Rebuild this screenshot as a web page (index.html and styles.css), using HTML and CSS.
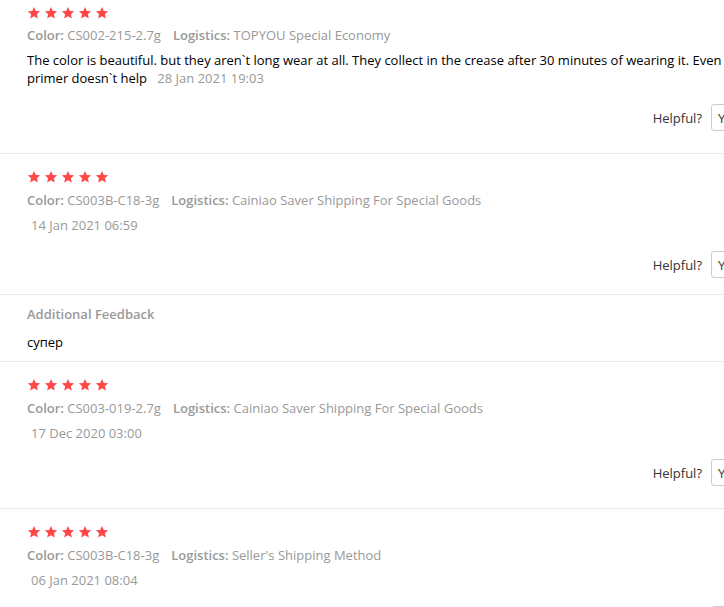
FILE: index.html
```html
<!DOCTYPE html>
<html lang="en">
<head>
<meta charset="utf-8">
<title>Reviews</title>
<link rel="stylesheet" href="styles.css">
</head>
<body>
<div class="feedback-list">
  <div class="review">
    <div class="stars">
      <svg viewBox="0 0 24 24"><path d="M12 1.5l3.1 6.9 7.4.7-5.6 5 1.7 7.4L12 17.6l-6.6 3.9 1.7-7.4-5.6-5 7.4-.7z"/></svg>
      <svg viewBox="0 0 24 24"><path d="M12 1.5l3.1 6.9 7.4.7-5.6 5 1.7 7.4L12 17.6l-6.6 3.9 1.7-7.4-5.6-5 7.4-.7z"/></svg>
      <svg viewBox="0 0 24 24"><path d="M12 1.5l3.1 6.9 7.4.7-5.6 5 1.7 7.4L12 17.6l-6.6 3.9 1.7-7.4-5.6-5 7.4-.7z"/></svg>
      <svg viewBox="0 0 24 24"><path d="M12 1.5l3.1 6.9 7.4.7-5.6 5 1.7 7.4L12 17.6l-6.6 3.9 1.7-7.4-5.6-5 7.4-.7z"/></svg>
      <svg viewBox="0 0 24 24"><path d="M12 1.5l3.1 6.9 7.4.7-5.6 5 1.7 7.4L12 17.6l-6.6 3.9 1.7-7.4-5.6-5 7.4-.7z"/></svg>
    </div>
    <div class="meta"><span class="prop"><b>Color:</b> CS002-215-2.7g</span><span class="prop"><b>Logistics:</b> TOPYOU Special Economy</span></div>
    <div class="body">The color is beautiful. but they aren`t long wear at all. They collect in the crease after 30 minutes of wearing it. Even primer doesn`t help <span class="date inline">28 Jan 2021 19:03</span></div>
    <div class="helpful"><span>Helpful?</span><button class="vote">Yes (0)</button><button class="vote">No (0)</button></div>
  </div>

  <div class="review has-additional">
    <div class="stars">
      <svg viewBox="0 0 24 24"><path d="M12 1.5l3.1 6.9 7.4.7-5.6 5 1.7 7.4L12 17.6l-6.6 3.9 1.7-7.4-5.6-5 7.4-.7z"/></svg>
      <svg viewBox="0 0 24 24"><path d="M12 1.5l3.1 6.9 7.4.7-5.6 5 1.7 7.4L12 17.6l-6.6 3.9 1.7-7.4-5.6-5 7.4-.7z"/></svg>
      <svg viewBox="0 0 24 24"><path d="M12 1.5l3.1 6.9 7.4.7-5.6 5 1.7 7.4L12 17.6l-6.6 3.9 1.7-7.4-5.6-5 7.4-.7z"/></svg>
      <svg viewBox="0 0 24 24"><path d="M12 1.5l3.1 6.9 7.4.7-5.6 5 1.7 7.4L12 17.6l-6.6 3.9 1.7-7.4-5.6-5 7.4-.7z"/></svg>
      <svg viewBox="0 0 24 24"><path d="M12 1.5l3.1 6.9 7.4.7-5.6 5 1.7 7.4L12 17.6l-6.6 3.9 1.7-7.4-5.6-5 7.4-.7z"/></svg>
    </div>
    <div class="meta"><span class="prop"><b>Color:</b> CS003B-C18-3g</span><span class="prop"><b>Logistics:</b> Cainiao Saver Shipping For Special Goods</span></div>
    <div class="body"><span class="date">14 Jan 2021 06:59</span></div>
    <div class="helpful"><span>Helpful?</span><button class="vote">Yes (0)</button><button class="vote">No (0)</button></div>
  </div>

  <div class="additional">
    <div class="add-title">Additional Feedback</div>
    <div class="add-text">супер</div>
  </div>

  <div class="review">
    <div class="stars">
      <svg viewBox="0 0 24 24"><path d="M12 1.5l3.1 6.9 7.4.7-5.6 5 1.7 7.4L12 17.6l-6.6 3.9 1.7-7.4-5.6-5 7.4-.7z"/></svg>
      <svg viewBox="0 0 24 24"><path d="M12 1.5l3.1 6.9 7.4.7-5.6 5 1.7 7.4L12 17.6l-6.6 3.9 1.7-7.4-5.6-5 7.4-.7z"/></svg>
      <svg viewBox="0 0 24 24"><path d="M12 1.5l3.1 6.9 7.4.7-5.6 5 1.7 7.4L12 17.6l-6.6 3.9 1.7-7.4-5.6-5 7.4-.7z"/></svg>
      <svg viewBox="0 0 24 24"><path d="M12 1.5l3.1 6.9 7.4.7-5.6 5 1.7 7.4L12 17.6l-6.6 3.9 1.7-7.4-5.6-5 7.4-.7z"/></svg>
      <svg viewBox="0 0 24 24"><path d="M12 1.5l3.1 6.9 7.4.7-5.6 5 1.7 7.4L12 17.6l-6.6 3.9 1.7-7.4-5.6-5 7.4-.7z"/></svg>
    </div>
    <div class="meta"><span class="prop"><b>Color:</b> CS003-019-2.7g</span><span class="prop"><b>Logistics:</b> Cainiao Saver Shipping For Special Goods</span></div>
    <div class="body"><span class="date">17 Dec 2020 03:00</span></div>
    <div class="helpful"><span>Helpful?</span><button class="vote">Yes (0)</button><button class="vote">No (0)</button></div>
  </div>

  <div class="review">
    <div class="stars">
      <svg viewBox="0 0 24 24"><path d="M12 1.5l3.1 6.9 7.4.7-5.6 5 1.7 7.4L12 17.6l-6.6 3.9 1.7-7.4-5.6-5 7.4-.7z"/></svg>
      <svg viewBox="0 0 24 24"><path d="M12 1.5l3.1 6.9 7.4.7-5.6 5 1.7 7.4L12 17.6l-6.6 3.9 1.7-7.4-5.6-5 7.4-.7z"/></svg>
      <svg viewBox="0 0 24 24"><path d="M12 1.5l3.1 6.9 7.4.7-5.6 5 1.7 7.4L12 17.6l-6.6 3.9 1.7-7.4-5.6-5 7.4-.7z"/></svg>
      <svg viewBox="0 0 24 24"><path d="M12 1.5l3.1 6.9 7.4.7-5.6 5 1.7 7.4L12 17.6l-6.6 3.9 1.7-7.4-5.6-5 7.4-.7z"/></svg>
      <svg viewBox="0 0 24 24"><path d="M12 1.5l3.1 6.9 7.4.7-5.6 5 1.7 7.4L12 17.6l-6.6 3.9 1.7-7.4-5.6-5 7.4-.7z"/></svg>
    </div>
    <div class="meta"><span class="prop"><b>Color:</b> CS003B-C18-3g</span><span class="prop"><b>Logistics:</b> Seller's Shipping Method</span></div>
    <div class="body"><span class="date">06 Jan 2021 08:04</span></div>
    <div class="helpful"><span>Helpful?</span><button class="vote">Yes (0)</button><button class="vote">No (0)</button></div>
  </div>
</div>
</body>
</html>
```
FILE: styles.css
```css
html, body {
  margin: 0;
  padding: 0;
  background: #fff;
  overflow: hidden;
}
body {
  font-family: "Open Sans", "Liberation Sans", sans-serif;
  font-size: 13px;
  line-height: 18px;
  color: #000;
}
.feedback-list {
  width: 840px;
  margin-top: -10px;
}
.review {
  padding: 16px 0 22px 27px;
  border-bottom: 1px solid #e8e8e8;
}
.review.has-additional {
  padding-bottom: 16px;
}
.review:first-child .meta {
  margin-top: 6px;
}
.stars {
  display: flex;
  gap: 3px;
  height: 14px;
  align-items: center;
}
.stars svg {
  width: 14px;
  height: 14px;
  fill: #ff4747;
  display: block;
}
.meta {
  margin-top: 7px;
  color: #999;
}
.meta .prop {
  margin-right: 12px;
}
.meta b {
  font-weight: 600;
}
.body {
  margin-top: 7px;
  width: 720px;
}
.date {
  color: #999;
  margin-left: 4px;
}
.date.inline {
  margin-left: 7px;
}
.helpful {
  margin-top: 17px;
  display: flex;
  align-items: center;
  justify-content: flex-end;
  gap: 9px;
  color: #333;
}
.vote {
  height: 27px;
  padding: 0 6px;
  font: inherit;
  color: #333;
  background: #fff;
  border: 1px solid #ccc;
  border-radius: 3px;
  width: 60px;
  text-align: left;
}
.additional {
  padding: 10px 0 10px 27px;
  border-bottom: 1px solid #e8e8e8;
}
.add-title {
  color: #999;
  font-weight: 600;
}
.add-text {
  margin-top: 10px;
}
```
